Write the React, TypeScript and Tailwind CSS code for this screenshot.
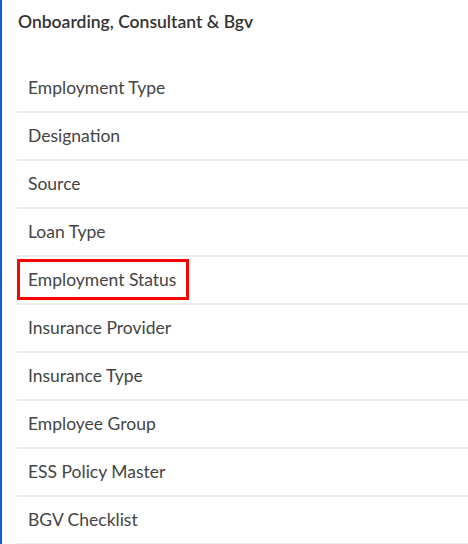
import React from "react";

const items = [
  "Employment Type",
  "Designation",
  "Source",
  "Loan Type",
  "Employment Status",
  "Insurance Provider",
  "Insurance Type",
  "Employee Group",
  "ESS Policy Master",
  "BGV Checklist",
];

export default function App() {
  return (
    <div className="w-[468px] h-[544px] overflow-hidden bg-white border-l-2 border-[#0b5ed7] font-['Lato',sans-serif]">
      <div className="h-[65px] pl-4 pt-[11px]">
        <h3 className="text-[17.5px] font-semibold text-[#333] leading-[22px]">Onboarding, Consultant &amp; Bgv</h3>
      </div>
      <ul className="ml-[13px]">
        {items.map((item) => (
          <li key={item} className="h-[48px] border-b-2 border-[#ececec] flex items-center pl-[13px] text-[17.5px] text-[#444]">
            {item === "Employment Status" ? (
              <span className="relative">
                {item}
                <span className="absolute -left-[11px] -right-[13px] -top-[8px] -bottom-[7px] border-[3px] border-[#f00]" />
              </span>
            ) : (
              item
            )}
          </li>
        ))}
      </ul>
    </div>
  );
}
